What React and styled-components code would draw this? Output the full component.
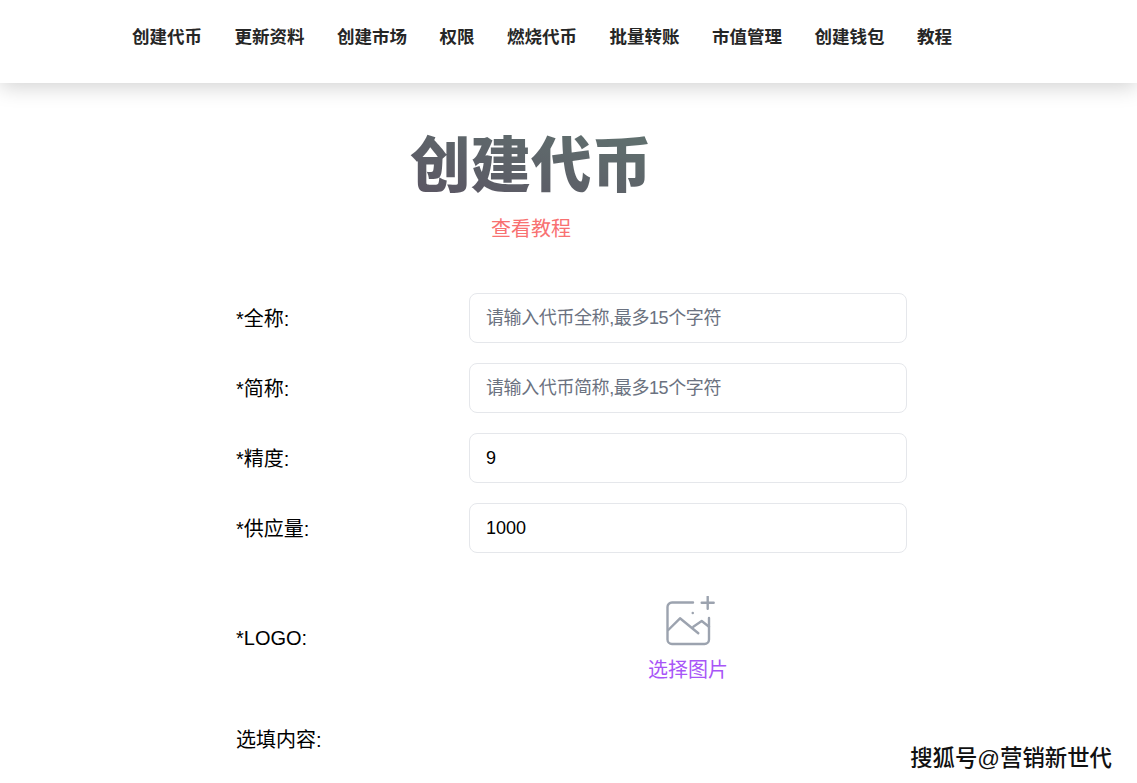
import styled, { createGlobalStyle } from 'styled-components'

const NAV_ITEMS = ['创建代币', '更新资料', '创建市场', '权限', '燃烧代币', '批量转账', '市值管理', '创建钱包', '教程']

const App = () => {
    return (
        <Page>
            <GlobalStyle />
            <Header>
                {NAV_ITEMS.map(item => <NavItem key={item}>{item}</NavItem>)}
            </Header>
            <Main>
                <TitleBlock>
                    <Title>创建代币</Title>
                    <TutorialLink>查看教程</TutorialLink>
                </TitleBlock>
                <Form>
                    <Row>
                        <FieldLabel>*全称:</FieldLabel>
                        <Input placeholder="请输入代币全称,最多15个字符" />
                    </Row>
                    <Row>
                        <FieldLabel>*简称:</FieldLabel>
                        <Input placeholder="请输入代币简称,最多15个字符" />
                    </Row>
                    <Row>
                        <FieldLabel>*精度:</FieldLabel>
                        <Input defaultValue="9" />
                    </Row>
                    <Row>
                        <FieldLabel>*供应量:</FieldLabel>
                        <Input defaultValue="1000" />
                    </Row>
                    <LogoRow>
                        <Label>*LOGO:</Label>
                        <Upload>
                            <UploadIcon width="50" height="50" viewBox="0 0 50 50" fill="none" stroke="#9ca3af" strokeWidth="2.4" strokeLinecap="round" strokeLinejoin="round">
                                <path d="M27 6.5H6A4.5 4.5 0 0 0 1.5 11v32.5A4.5 4.5 0 0 0 6 48h32.5a4.5 4.5 0 0 0 4.5-4.5V22" />
                                <path d="M2.3 34L14 22.3l18.3 15" />
                                <path d="M27.3 30.7l8.4-5.7 7.3 5.7" />
                                <path d="M41.7.7v12M35.7 6.7h12" />
                                <path d="M26.7 17h.1" />
                            </UploadIcon>
                            <UploadText>选择图片</UploadText>
                        </Upload>
                    </LogoRow>
                    <OptionalRow>
                        <Label>选填内容:</Label>
                    </OptionalRow>
                </Form>
            </Main>
            <Watermark>搜狐号@营销新世代</Watermark>
        </Page>
    )
}

const GlobalStyle = createGlobalStyle`
  html, body {
    margin: 0;
    padding: 0;
    background: #fff;
    overflow: hidden;
  }
  body {
    font-family: "Liberation Sans", "Noto Sans CJK SC", sans-serif;
  }
`;
const Page = styled.div`
  position: relative;
  width: 1137px;
  height: 783px;
  overflow: hidden;
`;
const Header = styled.header`
  height: 83px;
  padding-left: 132px;
  display: flex;
  align-items: center;
  gap: 32.5px;
  background: #fff;
  box-shadow: 0 4px 20px rgba(0, 0, 0, 0.18);
  box-sizing: border-box;
  padding-bottom: 12px;
`;
const NavItem = styled.a`
  font-size: 17.5px;
  font-weight: 700;
  color: #262626;
`;
const Main = styled.main`
  padding-left: 236px;
`;
const TitleBlock = styled.div`
  width: 590px;
  padding-top: 44px;
  text-align: center;
`;
const Title = styled.h1`
  width: fit-content;
  margin: 0 auto;
  font-size: 60.5px;
  line-height: 78px;
  font-weight: 900;
  background: linear-gradient(15deg, #5a5362, #617370);
  -webkit-background-clip: text;
  background-clip: text;
  color: transparent;
`;
const TutorialLink = styled.div`
  margin-top: 10px;
  font-size: 20px;
  line-height: 28px;
  color: #f87171;
`;
const Form = styled.div`
  margin-top: 50px;
  width: 671px;
  display: flex;
  flex-direction: column;
  gap: 20px;
`;
const Row = styled.div`
  display: flex;
  align-items: center;
  height: 50px;
`;
const Label = styled.label`
  width: 233px;
  flex-shrink: 0;
  font-size: 20px;
  color: #000;
`;
const FieldLabel = styled(Label)`
  padding-bottom: 2px;
`;
const Input = styled.input`
  width: 438px;
  height: 50px;
  box-sizing: border-box;
  padding: 1px 16px 0;
  border: 1px solid #e5e7eb;
  border-radius: 8px;
  outline: none;
  background: #fff;
  font-family: inherit;
  font-size: 18px;
  color: #000;

  &::placeholder {
    color: #6b7280;
    opacity: 1;
    letter-spacing: -0.4px;
  }
`;
const LogoRow = styled(Row)`
  height: 100px;
  margin-top: 15px;
`;
const Upload = styled.div`
  width: 438px;
  margin-top: 3px;
  display: flex;
  flex-direction: column;
  align-items: center;
  gap: 10px;
`;
const UploadIcon = styled.svg`
  margin-left: 6px;
`;
const UploadText = styled.span`
  font-size: 20px;
  line-height: 28px;
  color: #a855f7;
`;
const OptionalRow = styled.div`
  margin-top: 18px;
  line-height: 28px;
  display: flex;
`;
const Watermark = styled.div`
  position: absolute;
  right: 25px;
  bottom: 9px;
  font-size: 22.4px;
  font-weight: 500;
  line-height: 30px;
  color: #111;
  text-shadow: -1px 0 #fff, 1px 0 #fff, 0 -1px #fff, 0 1px #fff;
`;

export default App;
